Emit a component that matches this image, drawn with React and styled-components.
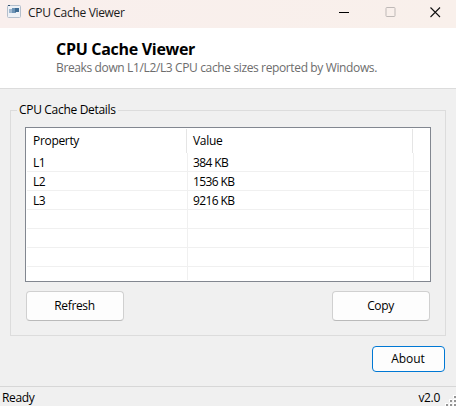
import { useState } from 'react';
// Styled component import
import styled, { createGlobalStyle } from 'styled-components';

const cacheData = [
  { property: 'L1', value: '384 KB' },
  { property: 'L2', value: '1536 KB' },
  { property: 'L3', value: '9216 KB' },
];

// The list always shows six full rows and the start of a seventh
const emptyRows = [0, 1, 2];

function AppIcon() {
  return (
    <svg width='14' height='14' viewBox='0 0 14 14'>
      <rect x='0.5' y='0.5' width='13' height='12' rx='1' fill='#eef1f6' stroke='#b4bfcc' />
      <rect x='1' y='0' width='2' height='1' fill='#31506f' />
      <rect x='2' y='4' width='4' height='4' fill='#9fb8d0' />
      <rect x='5' y='3' width='4' height='5' fill='#6d93b5' />
      <rect x='8' y='3' width='4' height='4' fill='#3f6c94' />
    </svg>
  );
}

function SizeGrip() {
  const dots = [
    [10, 1],
    [6, 5],
    [10, 5],
    [2, 9],
    [6, 9],
    [10, 9],
  ];

  return (
    <svg width='12' height='12' viewBox='0 0 12 12' shapeRendering='crispEdges'>
      {dots.map(([x, y]) => (
        <g key={`${x}-${y}`}>
          <rect x={x - 1} y={y - 1} width='3' height='3' fill='#ffffff' />
          <rect x={x} y={y} width='2' height='2' fill='#949494' />
        </g>
      ))}
    </svg>
  );
}

function App() {
  const [rows, setRows] = useState(cacheData);

  const copyHandler = () => {
    const text = rows.map((row) => `${row.property}\t${row.value}`).join('\n');
    navigator.clipboard?.writeText(text);
  };

  return (
    <Window>
      <GlobalStyle />
      <TitleBar>
        <AppIcon />
        <Title>CPU Cache Viewer</Title>
        <WindowButtons>
          <svg width='11' height='11' viewBox='0 0 11 11' shapeRendering='crispEdges'>
            <rect x='0' y='5' width='10' height='1' fill='#000' />
          </svg>
          <svg width='11' height='11' viewBox='0 0 11 11'>
            <rect x='1' y='0.5' width='9' height='9' rx='0.8' fill='none' stroke='#bfb9b7' />
          </svg>
          <svg width='11' height='11' viewBox='0 0 11 11'>
            <path d='M0.5 0.5 L10 10 M10 0.5 L0.5 10' stroke='#111' strokeWidth='1.1' />
          </svg>
        </WindowButtons>
      </TitleBar>
      <Header>
        <Heading>CPU Cache Viewer</Heading>
        <Subtitle>Breaks down L1/L2/L3 CPU cache sizes reported by Windows.</Subtitle>
      </Header>
      <Content>
        <Group>
          <Legend>CPU Cache Details</Legend>
          <ListView>
            <HeaderRow>
              <HeaderCell>Property</HeaderCell>
              <HeaderCell>Value</HeaderCell>
            </HeaderRow>
            {rows.map((row) => (
              <Row key={row.property}>
                <Cell>{row.property}</Cell>
                <Cell>{row.value}</Cell>
              </Row>
            ))}
            {emptyRows.map((row) => (
              <Row key={row}>
                <Cell />
                <Cell />
              </Row>
            ))}
            <Row $last>
              <Cell />
              <Cell />
            </Row>
          </ListView>
          <Actions>
            <Button onClick={() => setRows([...cacheData])}>Refresh</Button>
            <Button onClick={copyHandler}>Copy</Button>
          </Actions>
        </Group>
        <Button $primary>About</Button>
      </Content>
      <StatusBar>
        <span>Ready</span>
        <Version>v2.0</Version>
        <SizeGrip />
      </StatusBar>
    </Window>
  );
}

const GlobalStyle = createGlobalStyle`
  * {
    box-sizing: border-box;
  }

  body {
    margin: 0;
    overflow: hidden;
  }
`;

const Window = styled.div`
  display: flex;
  flex-direction: column;
  width: 456px;
  height: 406px;
  background-color: #f0f0f0;
  color: #000;
  font-family: 'Open Sans', 'Noto Sans', sans-serif;
  font-size: 12px;
  letter-spacing: -0.32px;
  line-height: 16px;
  white-space: nowrap;
`;

const TitleBar = styled.div`
  display: flex;
  align-items: flex-start;
  height: 28px;
  padding: 5px 15px 0 7px;
  background: linear-gradient(90deg, #f9efed, #f9f0eb);
`;

const Title = styled.span`
  margin-left: 7px;
  color: #1b1b1b;
`;

const WindowButtons = styled.div`
  display: flex;
  gap: 34.5px;
  margin-left: auto;
  padding-top: 2px;
`;

const Header = styled.div`
  height: 61px;
  padding: 11px 0 0 56px;
  border-bottom: 1px solid #dcdcdc;
  background-color: #fff;
`;

const Heading = styled.h1`
  margin: 0;
  font-size: 16px;
  font-weight: 700;
  letter-spacing: -0.3px;
  line-height: 21px;
`;

const Subtitle = styled.p`
  margin: 0;
  color: #6d6d6d;
  letter-spacing: -0.37px;
`;

const Content = styled.div`
  display: flex;
  flex: 1;
  flex-direction: column;
  align-items: flex-end;
  gap: 10px;
  padding: 13px 10px 0;

  > button {
    margin-right: 1px;
  }
`;

const Group = styled.fieldset`
  width: 436px;
  height: 234px;
  margin: 0;
  padding: 9px 14px 0;
  border: 1px solid #dcdcdc;
`;

const Legend = styled.legend`
  margin-left: -8px;
  padding: 0 2px;
`;

const ListView = styled.div`
  width: 406px;
  height: 155px;
  padding: 1px;
  border: 1px solid #828790;
  background-color: #fff;
`;

const HeaderRow = styled.div`
  display: grid;
  grid-template-columns: 160px 226px;
  height: 24px;
`;

const HeaderCell = styled.div`
  padding: 4px 0 0 6px;
  border-right: 1px solid #e5e5e5;
`;

const Row = styled.div`
  display: grid;
  grid-template-columns: 161px 226px;
  height: ${({ $last }) => ($last ? '13px' : '19px')};
  border-bottom: ${({ $last }) => ($last ? 'none' : '1px solid #f0f0f0')};
  letter-spacing: -0.6px;
`;

const Cell = styled.div`
  padding: 2px 0 0 6px;
  border-right: 1px solid #f0f0f0;

  & + & {
    padding-left: 5px;
  }
`;

const Actions = styled.div`
  display: flex;
  justify-content: space-between;
  padding: 9px 1px 0;
`;

const Button = styled.button`
  width: ${({ $primary }) => ($primary ? '73px' : '98px')};
  height: ${({ $primary }) => ($primary ? '26px' : '30px')};
  padding: 0 1px 0 0;
  border: 1px solid ${({ $primary }) => ($primary ? '#0078d4' : '#d0d0d0')};
  border-bottom-color: ${({ $primary }) => ($primary ? '#0078d4' : '#bababa')};
  border-radius: 4px;
  background-color: #fdfdfd;
  color: #000;
  font: inherit;
  letter-spacing: ${({ $primary }) => ($primary ? '-0.1px' : '-0.35px')};
`;

const StatusBar = styled.div`
  display: flex;
  height: 20px;
  padding: 3px 0 0 2px;
  border-top: 1px solid #d7d7d7;

  svg {
    margin: 5px 0 0 4px;
  }
`;

const Version = styled.span`
  margin-left: auto;
`;

export default App;
